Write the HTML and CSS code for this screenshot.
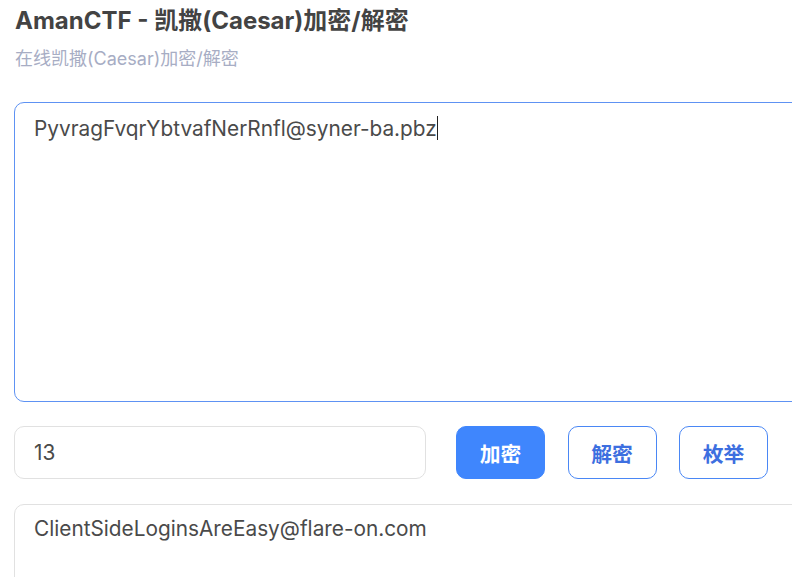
FILE: index.html
```html
<!DOCTYPE html>
<html lang="zh">
<head>
<meta charset="utf-8">
<title>AmanCTF - 凯撒(Caesar)加密/解密</title>
<link rel="stylesheet" href="styles.css">
</head>
<body>
<main class="page">
  <header class="head">
    <h1 class="title">AmanCTF - 凯撒(Caesar)加密/解密</h1>
    <p class="subtitle">在线凯撒(Caesar)加密/解密</p>
  </header>
  <div class="field field-input">
    <div class="field-text">PyvragFvqrYbtvafNerRnfl@syner-ba.pbz<span class="caret"></span></div>
  </div>
  <div class="controls">
    <div class="shift">13</div>
    <button class="btn btn-primary">加密</button>
    <button class="btn btn-outline">解密</button>
    <button class="btn btn-outline">枚举</button>
  </div>
  <div class="field field-output">
    <div class="field-text">ClientSideLoginsAreEasy@flare-on.com</div>
  </div>
</main>
</body>
</html>
```
FILE: styles.css
```css
html, body {
  margin: 0;
  padding: 0;
  overflow: hidden;
  background: #ffffff;
}
body {
  font-family: Inter, "Noto Sans CJK SC", sans-serif;
  color: #454545;
}
.page {
  width: 820px;
  padding: 4px 0 0 14px;
}
.head {
  padding-left: 1px;
}
.title {
  margin: 0;
  font-size: 24px;
  line-height: 34px;
  font-weight: 700;
  color: #434343;
}
.subtitle {
  margin: 8px 0 0;
  font-size: 18px;
  line-height: 26px;
  color: #a7adc4;
}
.field {
  box-sizing: border-box;
  border-radius: 10px;
  background: #fff;
}
.field-input {
  margin-top: 30px;
  height: 300px;
  border: 1px solid #5e92f3;
  padding: 12px 19px;
}
.field-output {
  margin-top: 25px;
  height: 100px;
  border: 1px solid #e1e1e1;
  padding: 10px 19px;
}
.field-text {
  font-size: 20.8px;
  line-height: 28px;
  color: #4a4a4a;
}
.caret {
  display: inline-block;
  width: 1.5px;
  height: 24px;
  background: #222;
  vertical-align: -4px;
}
.controls {
  display: flex;
  align-items: center;
  margin-top: 24px;
}
.shift {
  box-sizing: border-box;
  width: 412px;
  height: 53px;
  border: 1px solid #e1e1e1;
  border-radius: 10px;
  padding: 0 19px;
  display: flex;
  align-items: center;
  font-size: 20.8px;
  color: #4a4a4a;
  margin-right: 30px;
}
.btn {
  box-sizing: border-box;
  width: 89px;
  height: 53px;
  border-radius: 10px;
  font-family: Inter, "Noto Sans CJK SC", sans-serif;
  font-size: 20.8px;
  font-weight: 700;
  cursor: pointer;
  margin: 0;
}
.btn + .btn {
  margin-left: 22.5px;
}
.btn-primary {
  background: #3f86fd;
  border: 1px solid #3f86fd;
  color: #fff;
}
.btn-outline {
  background: #fff;
  border: 1px solid #4a87f5;
  color: #3d6fe0;
}
```
